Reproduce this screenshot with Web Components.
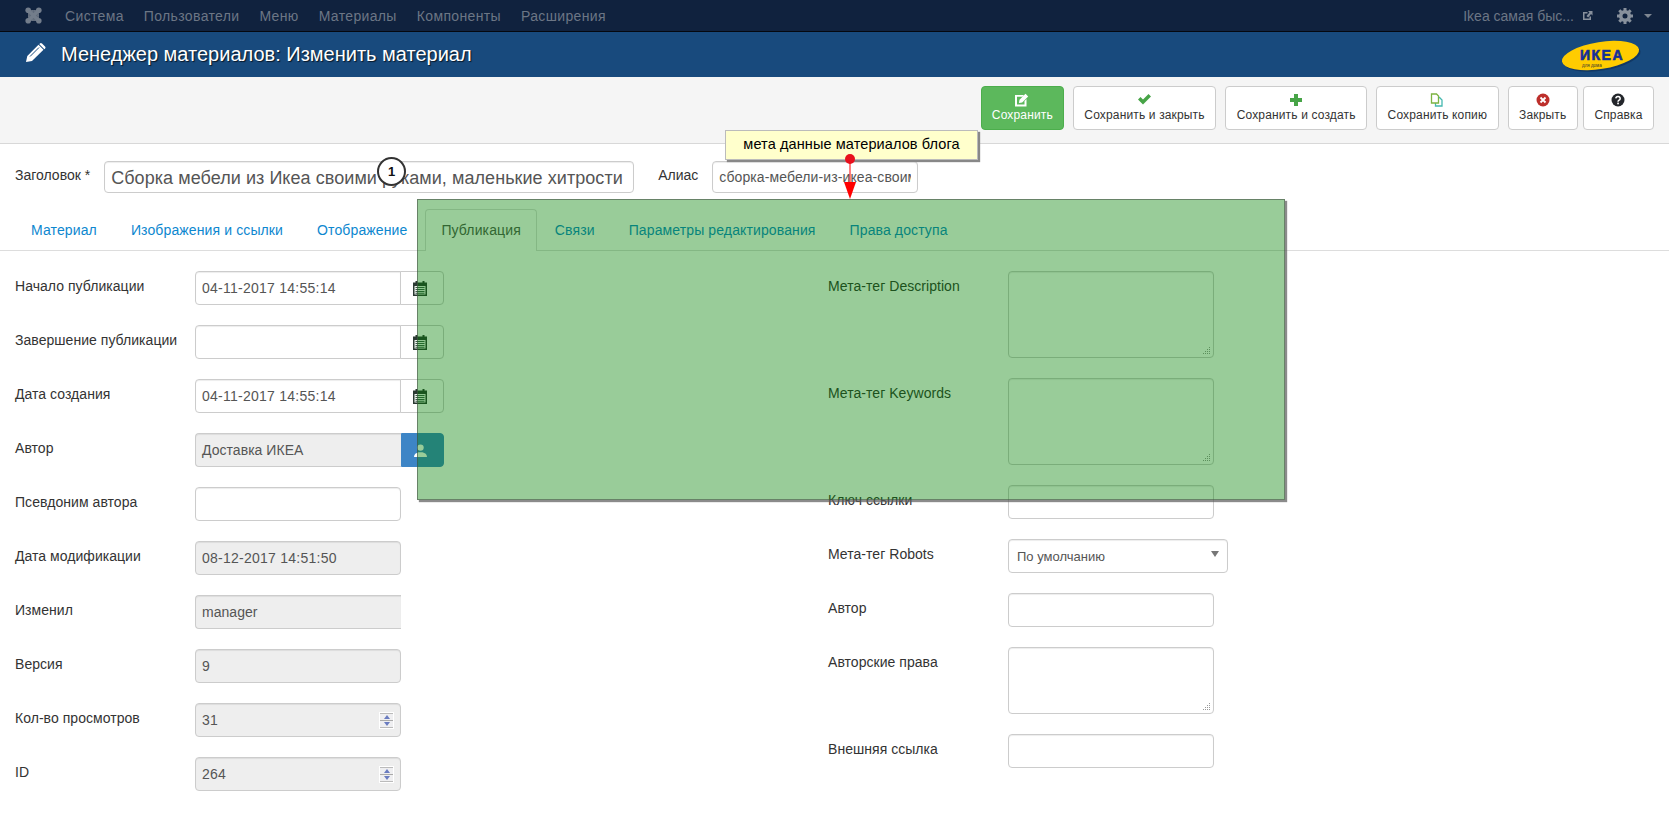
<!DOCTYPE html>
<html lang="ru"><head><meta charset="utf-8"><title>Менеджер материалов</title>
<style>
html,body{margin:0;padding:0;background:#fff;font-family:"Liberation Sans",Arial,sans-serif;font-size:14px;color:#333}
x-page{display:block;position:relative;width:1669px;height:831px;overflow:hidden}
</style></head><body>
<x-page>
  <x-nav></x-nav>
  <x-title-bar>Менеджер материалов: Изменить материал</x-title-bar>
  <x-toolbar>
    <x-tool-btn icon="edit" variant="primary">Сохранить</x-tool-btn>
    <x-tool-btn icon="check">Сохранить и закрыть</x-tool-btn>
    <x-tool-btn icon="plus">Сохранить и создать</x-tool-btn>
    <x-tool-btn icon="copy">Сохранить копию</x-tool-btn>
    <x-tool-btn icon="close">Закрыть</x-tool-btn>
    <x-tool-btn icon="help">Справка</x-tool-btn>
  </x-toolbar>
  <x-title-row></x-title-row>
  <x-tabs></x-tabs>
  <x-form-grid>
    <div slot="left">
      <x-field type="date" value="04-11-2017 14:55:14">Начало публикации</x-field>
      <x-field type="date">Завершение публикации</x-field>
      <x-field type="date" value="04-11-2017 14:55:14">Дата создания</x-field>
      <x-field type="user" value="Доставка ИКЕА">Автор</x-field>
      <x-field>Псевдоним автора</x-field>
      <x-field type="readonly" value="08-12-2017 14:51:50">Дата модификации</x-field>
      <x-field type="readonly" square value="manager">Изменил</x-field>
      <x-field type="readonly" value="9">Версия</x-field>
      <x-field type="number" value="31">Кол-во просмотров</x-field>
      <x-field type="number" value="264">ID</x-field>
    </div>
    <div slot="right">
      <x-field type="area" h="87">Мета-тег Description</x-field>
      <x-field type="area" h="87">Мета-тег Keywords</x-field>
      <x-field>Ключ ссылки</x-field>
      <x-field type="select" value="По умолчанию">Мета-тег Robots</x-field>
      <x-field>Автор</x-field>
      <x-field type="area" h="67">Авторские права</x-field>
      <x-field>Внешняя ссылка</x-field>
    </div>
  </x-form-grid>
  <x-annotations></x-annotations>
</x-page>
<script>
function def(name, css, html){
  customElements.define(name, class extends HTMLElement{
    constructor(){super();this.attachShadow({mode:'open'});}
    connectedCallback(){
      const h = typeof html==='function'?html(this):html;
      this.shadowRoot.innerHTML='<style>'+css+'</style>'+h;
    }
  });
}
const ICONS={
 edit:'<svg width="16" height="14" viewBox="0 0 16 14"><path d="M1 2h9L8.500 3.800H3V11.500h7.500V8L12.500 6V13.500H1z" fill="#fff"/><path d="M5.500 6.800 11.500 .8l2.700 2.700-6 6-3.300.6z" fill="#fff"/></svg>',
 check:'<svg width="15" height="13" viewBox="0 0 15 13"><path d="M1 6.500 3.500 4l2.500 2.500L11.500 1 14 3.500 6 11.500z" fill="#47a447"/></svg>',
 plus:'<svg width="14" height="14" viewBox="0 0 14 14"><path d="M5 1h4v4h4v4H9v4H5V9H1V5h4z" fill="#47a447"/></svg>',
 copy:'<svg width="14" height="14" viewBox="0 0 14 14"><path d="M5.500 4.500h4l2.500 2.500v6H5.500z" fill="#fff" stroke="#46b8b0" stroke-width="1.300"/><path d="M1.500 1h5l2 2v7h-7z" fill="#fff" stroke="#7cb342" stroke-width="1.300"/></svg>',
 close:'<svg width="14" height="14" viewBox="0 0 14 14"><circle cx="7" cy="7" r="6.500" fill="#bd2f2b"/><path d="M4.500 4.500l5 5m0-5l-5 5" stroke="#fff" stroke-width="1.800"/></svg>',
 help:'<svg width="14" height="14" viewBox="0 0 14 14"><circle cx="7" cy="7" r="6.500" fill="#23262b"/><path d="M4.800 5.400a2.200 2 0 1 1 3.300 1.800c-.8.500-1.100.8-1.100 1.500" fill="none" stroke="#fff" stroke-width="1.500"/><rect x="6.200" y="9.600" width="1.700" height="1.700" fill="#fff"/></svg>'
};
def('x-nav',`
:host{display:flex;align-items:center;box-sizing:border-box;height:32px;background:#10223e;border-bottom:1px solid #05080f;padding:0 17px 0 25px;color:#6c7685;font-size:14px}
.items{display:flex;gap:20px;margin-left:23px;letter-spacing:.35px}
.r{margin-left:auto;display:flex;align-items:center}
.gear{margin-left:24px}.car{margin-left:11px;width:0;height:0;border:4px solid transparent;border-top:4px solid #7f8792;border-bottom:0}
svg{display:block}
.ext{margin-left:8px}
`,`
<svg width="17" height="17" viewBox="0 0 17 17"><path d="M3 3h11v11H3z" fill="#5f6a7a"/><g fill="none" stroke="#737d8b" stroke-width="3.200"><path d="M3 3 14 14M14 3 3 14"/></g><path d="M4 4h9v9H4z" fill="none" stroke="#737d8b" stroke-width="1" stroke-dasharray="1.500 1"/><g fill="#737d8b"><circle cx="3.200" cy="3.200" r="2.800"/><circle cx="13.800" cy="3.200" r="2.800"/><circle cx="3.200" cy="13.800" r="2.800"/><circle cx="13.800" cy="13.800" r="2.800"/></g></svg>
<div class="items"><span>Система</span><span>Пользователи</span><span>Меню</span><span>Материалы</span><span>Компоненты</span><span>Расширения</span></div>
<div class="r"><span>Ikea самая быс...</span>
<svg class="ext" width="11" height="11" viewBox="0 0 11 11"><path d="M1 2h4.500v1.500H2.500v5h5V6.500H9V10H1z" fill="#87909c"/><path d="M6 1h4.500v4.500L9 4 6.200 7.500 4.500 6 7.500 2.500z" fill="#87909c"/></svg>
<svg class="gear" width="16" height="16" viewBox="0 0 16 16"><circle cx="8" cy="8" r="4.300" fill="none" stroke="#87909c" stroke-width="3.600"/><g stroke="#87909c" stroke-width="3"><path d="M8 0v3M8 13v3M0 8h3M13 8h3M2.300 2.300l2.100 2.100M11.600 11.600l2.100 2.100M13.700 2.300l-2.100 2.100M4.400 11.600l-2.100 2.100"/></g></svg>
<span class="car"></span></div>`);
def('x-title-bar',`
:host{display:flex;align-items:center;box-sizing:border-box;height:45px;background:#184a7d;padding:0 28px 0 25px;color:#fff;font-size:20px;text-shadow:1px 1px 1px rgba(0,0,0,.7)}
.t{margin-left:15px}
svg{display:block}.logo{margin-left:auto;margin-top:2px;overflow:visible}
.p{margin-top:-5px}
`,`
<svg class="p" width="21" height="21" viewBox="0 0 21 21"><path d="M1 20l1.300-6L13.500 2.800l5 5L7 19z" fill="#fff"/><path d="M14.800 1.500a1.600 1.600 0 0 1 2.200 0l3 3a1.600 1.600 0 0 1 0 2.200l-.6.600-5-5z" fill="#fff"/><path d="M5 14.500 14 5.500" stroke="#184a7d" stroke-width="1"/></svg>
<span class="t"><slot></slot></span>
<svg class="logo" width="80" height="34" viewBox="0 0 80 34"><ellipse cx="41" cy="18" rx="39" ry="13.500" transform="rotate(-9 41 18)" fill="#10305a" opacity=".7"/><ellipse cx="39.500" cy="16.500" rx="39" ry="13.500" transform="rotate(-9 39.500 16.500)" fill="#ffcc00"/><text x="41" y="20.500" text-anchor="middle" font-family="Liberation Sans" font-weight="700" font-size="14" letter-spacing="1.500" fill="#14309a" stroke="#14309a" stroke-width=".6" style="text-shadow:none">ИКЕА</text><text x="21" y="28" font-family="Liberation Sans" font-size="4.500" fill="#333" style="text-shadow:none">для дома</text></svg>`);
def('x-toolbar',`
:host{display:flex;justify-content:flex-end;gap:9px;box-sizing:border-box;height:67px;background:#f5f5f5;border-bottom:1px solid #d8d8d8;padding:9px 15px 0 0}
::slotted(x-tool-btn:last-child){margin-left:-4px}
`,'<slot></slot>');
def('x-tool-btn',`
:host{display:flex;flex-direction:column;align-items:center;box-sizing:border-box;height:44px;padding:0 10.500px;background:#fff;border:1px solid #ccc;border-radius:4px;font-size:12px;letter-spacing:.15px;color:#333;white-space:nowrap}
:host([variant=primary]){background:#5cb85c;border-color:#4cae4c;color:#fff;padding:0 10px}
.i{height:14px;margin-top:6px;margin-bottom:1px;display:block}
svg{display:block}
.l{line-height:15px}
`,h=>`<span class="i">${ICONS[h.getAttribute('icon')]}</span><span class="l"><slot></slot></span>`);
def('x-title-row',`
:host{display:flex;align-items:center;height:32px;margin-top:17px;padding-left:15px;color:#333}
.box{box-sizing:border-box;height:32px;background:#fff;border:1px solid #ccc;border-radius:4px;color:#555;overflow:hidden;white-space:nowrap;display:flex;align-items:center;box-shadow:inset 0 1px 1px rgba(0,0,0,.075)}
.tt{width:530px;margin-left:14px;padding:2px 6px 0;font-size:18px;letter-spacing:.06px}
.al{width:206px;margin-left:14px;padding:0 6px;font-size:14px;letter-spacing:.1px}
.al span{display:block;overflow:hidden}
.lb{margin-top:-4px}
`,`<span class="lb">Заголовок *</span><div class="box tt">Сборка мебели из Икеа своими руками, маленькие хитрости</div><span class="lb" style="margin-left:24px">Алиас</span><div class="box al"><span>сборка-мебели-из-икеа-своими</span></div>`);
def('x-tabs',`
:host{display:flex;box-sizing:border-box;height:42px;margin-top:16px;padding-left:15px;border-bottom:1px solid #ddd;font-size:14px;letter-spacing:.12px}
span{box-sizing:border-box;height:42px;padding:0 15px;margin-right:2px;color:#0d87cf;border:1px solid transparent;border-bottom:0;line-height:41px}
span.a{color:#555;background:#fff;border-color:#ddd;border-radius:4px 4px 0 0}
`,`<span>Материал</span><span>Изображения и ссылки</span><span>Отображение</span><span class="a">Публикация</span><span>Связи</span><span>Параметры редактирования</span><span>Права доступа</span>`);
def('x-form-grid',`
:host{display:grid;grid-template-columns:813px 1fr;margin-top:20px;padding-left:15px}
`,`<slot name="left"></slot><slot name="right"></slot>`);
def('x-field',`
:host{display:flex;align-items:flex-start;margin-bottom:20px;font-size:14px;color:#333;letter-spacing:.04px}
.lb{width:180px;flex:none;line-height:20px;padding-top:5px}
.c{display:flex}
.in{box-sizing:border-box;width:206px;height:34px;border:1px solid #ccc;border-radius:4px;background:#fff;color:#555;padding:1px 6px 0;line-height:31px;position:relative;white-space:nowrap;box-shadow:inset 0 1px 1px rgba(0,0,0,.075)}
.num{letter-spacing:.25px}
.ro{background:#eee}
.sq{border-radius:4px 0 0 4px;border-right:0}
.left{border-radius:4px 0 0 4px}
.add{box-sizing:border-box;width:44px;height:34px;margin-left:-1px;border:1px solid #ccc;border-radius:0 4px 4px 0;background:#fff;display:flex;align-items:center;justify-content:center;padding-right:4px}
.add.b{background:#3d85c6;border-color:#3d85c6;margin-left:0;width:43px}
svg{display:block}
.sel{width:220px;font-size:13px;padding:1px 8px 0;letter-spacing:0}
.sel:after{content:"";position:absolute;right:8px;top:11px;border:4px solid transparent;border-top:6px solid #777;border-bottom:0}
.grip{position:absolute;right:2px;bottom:2px}
.spin{position:absolute;right:6px;top:8px;width:15px;height:17px;background:#fff;display:flex;flex-direction:column;padding:1px;box-sizing:border-box}
.spin i{flex:1;background:#efeff1;display:flex;align-items:center;justify-content:center;border-top:1px solid #bbb}
.spin i:last-child{border-top:1px solid #aaa;border-bottom:1px solid #bbb}
.spin i:first-child:after{content:"";border:3.500px solid transparent;border-bottom:4px solid #6a7cc0;border-top:0}
.spin i:last-child:after{content:"";border:3.500px solid transparent;border-top:4px solid #6a7cc0;border-bottom:0}
`,h=>{
 const t=h.getAttribute('type')||'text', v=h.getAttribute('value')||'';
 const n=/^[\d\-: ]+$/.test(v)?' num':'';
 const cal='<span class="add"><svg width="14" height="15" viewBox="0 0 14 15"><path d="M0 1.500h2.500V0h2v1.500h5V0h2v1.500H14V15H0z" fill="#2b3a33"/><path d="M1.500 5h11v8.500h-11z" fill="#eef3ee"/><path d="M2.500 6.500h9M2.500 8.500h9M2.500 10.500h9M2.500 12.300h9" stroke="#3a5a48" stroke-width="1.100"/></svg></span>';
 const usr='<span class="add b"><svg width="13" height="13" viewBox="0 0 13 13"><circle cx="6.500" cy="3.600" r="3.200" fill="#fff"/><path d="M0 13c0-3 2-4 4.500-4.800h4C11 9 13 10 13 13z" fill="#fff"/></svg></span>';
 const grip='<svg class="grip" width="9" height="9" viewBox="0 0 9 9"><g fill="#999"><rect x="7" y="1" width="1" height="1"/><rect x="7" y="3" width="1" height="1"/><rect x="5" y="3" width="1" height="1"/><rect x="7" y="5" width="1" height="1"/><rect x="5" y="5" width="1" height="1"/><rect x="3" y="5" width="1" height="1"/><rect x="7" y="7" width="1" height="1"/><rect x="5" y="7" width="1" height="1"/><rect x="3" y="7" width="1" height="1"/><rect x="1" y="7" width="1" height="1"/></g></svg>';
 let c='';
 if(t==='date') c=`<div class="in left${n}">${v}</div>${cal}`;
 else if(t==='user') c=`<div class="in ro left" style="border-right:0">${v}</div>${usr}`;
 else if(t==='readonly') c=`<div class="in ro${n} ${h.hasAttribute('square')?'sq':''}">${v}</div>`;
 else if(t==='number') c=`<div class="in ro${n}">${v}<span class="spin"><i></i><i></i></span></div>`;
 else if(t==='area') c=`<div class="in" style="height:${h.getAttribute('h')}px">${grip}</div>`;
 else if(t==='select') c=`<div class="in sel">${v}</div>`;
 else c=`<div class="in">${v}</div>`;
 return `<span class="lb"><slot></slot></span><div class="c">${c}</div>`;
});
def('x-annotations',`
:host{display:block;position:absolute;inset:0;pointer-events:none}
.g{position:absolute;left:417px;top:199px;width:868px;height:301px;box-sizing:border-box;background:rgba(0,128,0,.4);border:1px solid rgba(70,80,70,.6);box-shadow:2px 2px 1px rgba(90,90,90,.7)}
.tip{position:absolute;left:725px;top:130px;width:253px;height:30px;box-sizing:border-box;background:#ffffcc;border:1px solid #bbb;box-shadow:2px 2px 1px #888;color:#000;font-size:14.500px;letter-spacing:.1px;line-height:27px;text-align:center}
.arrow{position:absolute;left:840px;top:152px;overflow:visible}
.n{position:absolute;left:377px;top:157px;width:29px;height:29px;box-sizing:border-box;border:2px solid #333;border-radius:50%;background:#fff;color:#111;font-size:13px;font-weight:700;line-height:25px;text-align:center}
`,`<div class="g"></div><div class="tip">мета данные материалов блога</div>
<svg class="arrow" width="20" height="48" viewBox="0 0 20 48"><path d="M10 7V32" stroke="#f00" stroke-width="1"/><circle cx="10" cy="7" r="5" fill="#e8101c"/><path d="M4 30h12l-6 17z" fill="#f00"/></svg>
<div class="n">1</div>`);
</script>
</body></html>
